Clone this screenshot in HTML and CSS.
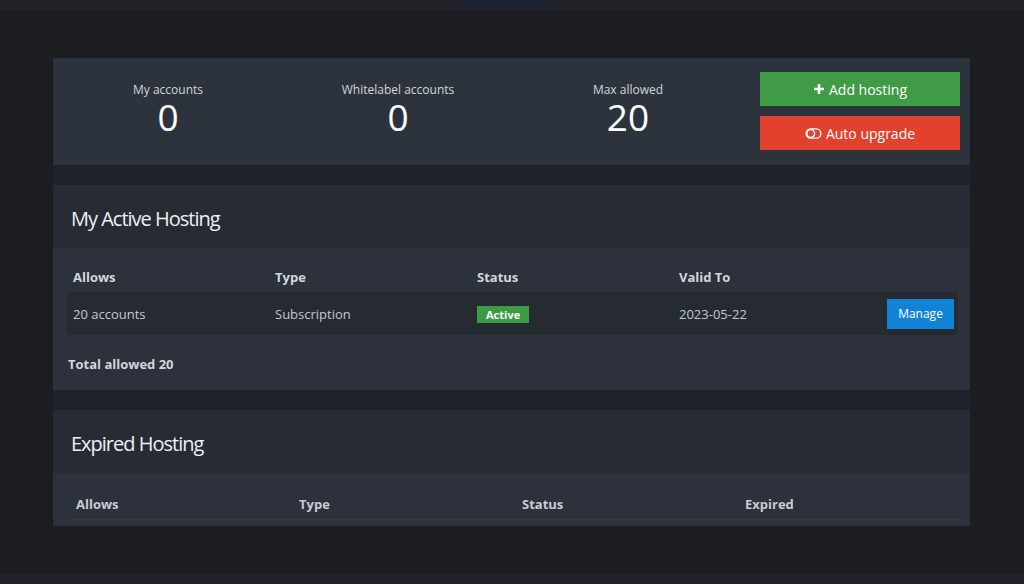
FILE: index.html
```html
<!DOCTYPE html>
<html>
<head>
<meta charset="utf-8">
<link rel="stylesheet" href="styles.css">
</head>
<body>
<div class="topbar"><div class="toptab"></div></div>
<main class="main">
  <div class="stack">
    <section class="stats">
      <div class="stat"><div class="stat-label">My accounts</div><div class="stat-value">0</div></div>
      <div class="stat"><div class="stat-label">Whitelabel accounts</div><div class="stat-value">0</div></div>
      <div class="stat"><div class="stat-label">Max allowed</div><div class="stat-value">20</div></div>
      <div class="actions">
        <button class="btn btn-green"><svg class="ico" viewBox="0 0 12 12" width="12" height="12"><path d="M6 1v10M1 6h10" stroke="#fff" stroke-width="2.6" stroke-linecap="butt"/></svg>Add hosting</button>
        <button class="btn btn-red"><svg class="ico" viewBox="0 0 18 12" width="17" height="11"><rect x="1" y="1" width="16" height="10" rx="5" fill="none" stroke="#fff" stroke-width="1.5"/><circle cx="6" cy="6" r="4.2" fill="none" stroke="#fff" stroke-width="1.5"/></svg>Auto upgrade</button>
      </div>
    </section>

    <section class="card card-active">
      <div class="card-head"><h2>My Active Hosting</h2></div>
      <div class="card-body">
        <table class="tbl tbl-active">
          <thead>
            <tr><th>Allows</th><th>Type</th><th>Status</th><th>Valid To</th><th></th></tr>
          </thead>
          <tbody>
            <tr class="row-dark">
              <td>20 accounts</td>
              <td>Subscription</td>
              <td><span class="badge">Active</span></td>
              <td>2023-05-22</td>
              <td class="cell-right"><button class="btn-manage">Manage</button></td>
            </tr>
          </tbody>
        </table>
        <div class="total">Total allowed 20</div>
      </div>
    </section>

    <section class="card card-expired">
      <div class="card-head"><h2>Expired Hosting</h2></div>
      <div class="card-body body-expired">
        <table class="tbl tbl-expired">
          <thead>
            <tr><th>Allows</th><th>Type</th><th>Status</th><th>Expired</th></tr>
          </thead>
        </table>
      </div>
    </section>
  </div>
</main>
<footer class="footbar"></footer>
</body>
</html>
```

FILE: styles.css
```css
* { box-sizing: border-box; }
html, body { margin: 0; padding: 0; }
body {
  width: 1024px;
  height: 584px;
  overflow: hidden;
  background: #1c1d21;
  font-family: "Open Sans", "Noto Sans", sans-serif;
  color: #d6d9de;
  display: flex;
  flex-direction: column;
}
.topbar {
  height: 10px;
  background: #212229;
  display: flex;
  justify-content: center;
}
.toptab {
  width: 88px;
  margin-left: -10px;
  height: 10px;
  background: #1c2230;
}
.main {
  flex: 1;
  padding: 48px 54px 0 53px;
}
.stack {
  background: #1f2229;
  display: flex;
  flex-direction: column;
  gap: 20px;
}
.stats {
  height: 107px;
  background: #2d333d;
  display: flex;
  align-items: flex-start;
  padding: 14px 10px 0 0;
}
.stat {
  width: 230px;
  text-align: center;
  padding-top: 9px;
}
.stat-label {
  font-size: 12px;
  line-height: 16px;
  color: #d2d5da;
  padding-top: 1px;
}
.stat-value {
  font-size: 37px;
  line-height: 38px;
  color: #fff;
}
.actions {
  margin-left: auto;
  width: 200px;
  display: flex;
  flex-direction: column;
  gap: 10px;
}
.btn {
  height: 34px;
  border: 0;
  color: #fff;
  font-family: inherit;
  font-size: 14px;
  display: flex;
  align-items: center;
  justify-content: center;
  gap: 4px;
  padding: 0;
}
.btn-green { background: #3f9b46; }
.btn-red { background: #e1412d; }
.ico { display: block; }

.card {
  background: #2c313b;
}
.card-head {
  background: #272b33;
  height: 63px;
  display: flex;
  align-items: center;
  padding: 4px 0 0 18px;
}
.card-head h2 {
  margin: 0;
  font-size: 20px;
  font-weight: 400;
  letter-spacing: -1px;
  color: #eef0f3;
}
.card-body {
  padding: 14px 12px 0 14px;
  height: 142px;
}
.tbl {
  width: 100%;
  border-collapse: collapse;
  table-layout: fixed;
  font-size: 13px;
}
.tbl th {
  text-align: left;
  font-weight: 700;
  color: #d3d6db;
  padding: 0 6px;
  height: 30px;
}
.tbl-active th:nth-child(-n+4) { width: 202px; }
.tbl td {
  padding: 0 6px;
  height: 43px;
  color: #c4c8ce;
}
.row-dark td { background: #262a31; }
.cell-right { text-align: right; padding-right: 4px !important; }
.badge {
  display: inline-block;
  background: #3a9c44;
  color: #fff;
  font-weight: 700;
  font-size: 11px;
  line-height: 17px;
  padding: 0 9px;
}
.btn-manage {
  background: #1183d6;
  color: #fff;
  border: 0;
  font-family: inherit;
  font-size: 12px;
  width: 67px;
  height: 30px;
  padding: 0;
  vertical-align: middle;
}
.total {
  margin-top: 20px;
  font-size: 13px;
  font-weight: 700;
  color: #d3d6db;
  padding-left: 1px;
}
.body-expired {
  height: 53px;
  padding: 16px 8px 0 17px;
}
.tbl-expired {
  border-bottom: 1px solid #343a45;
}
.tbl-expired th { width: 223px; height: 30px; color: #c9ccd2; }
.footbar {
  height: 10px;
  background: #202127;
  border-top: 1px solid #25272e;
}
```
